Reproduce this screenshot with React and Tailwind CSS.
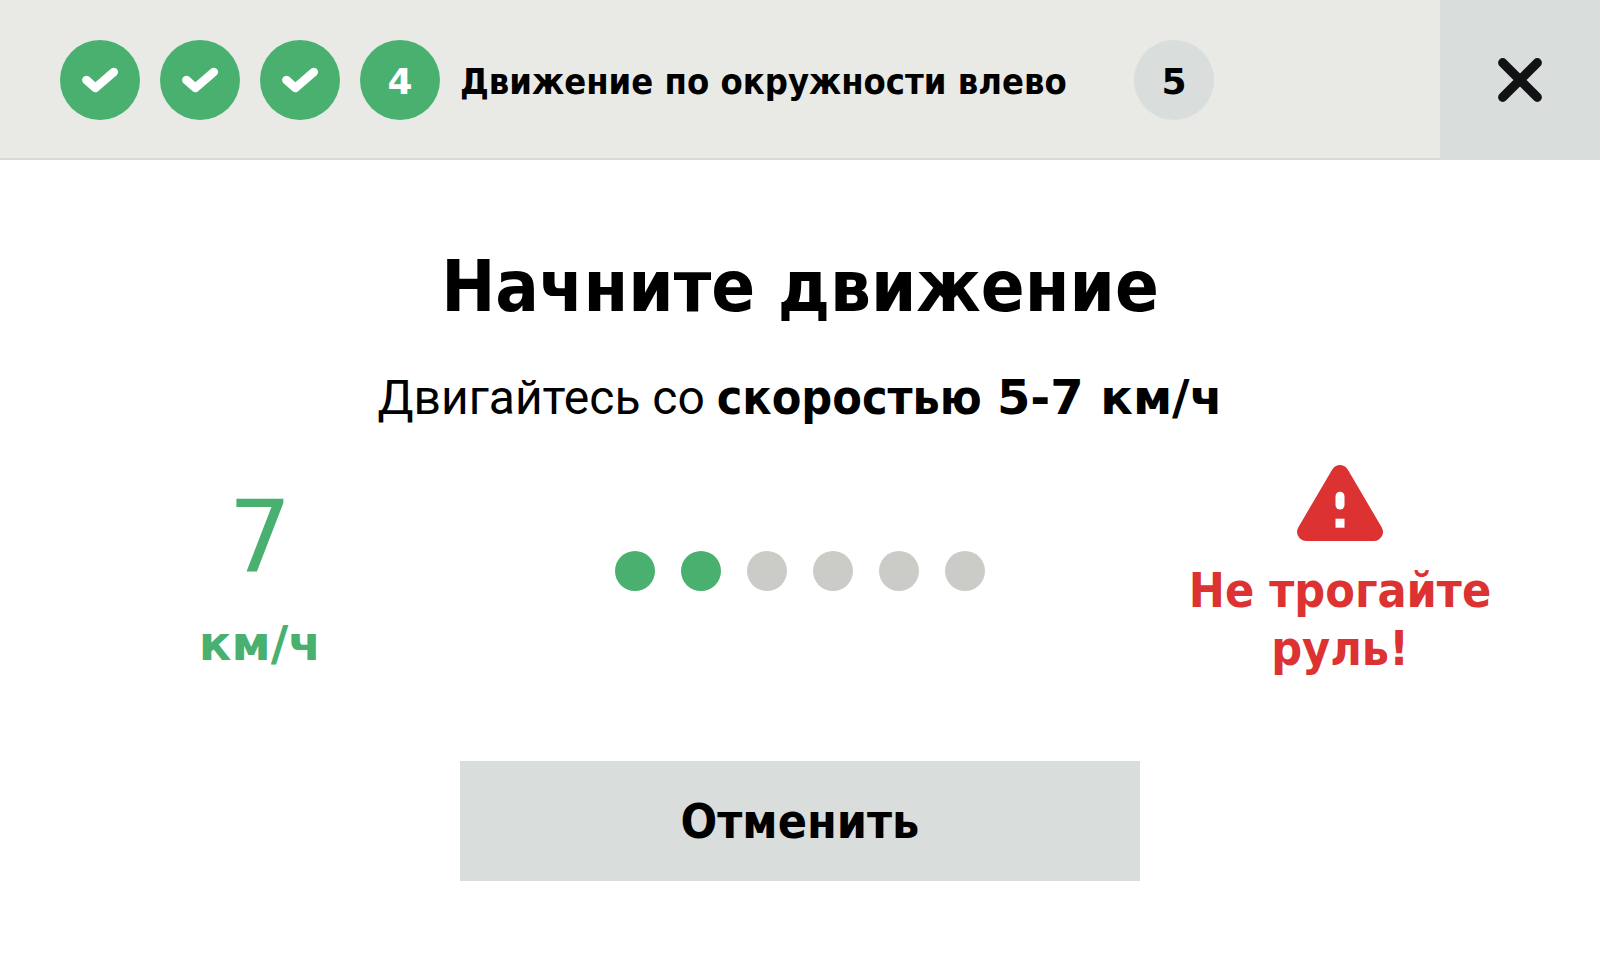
import React from "react";

const steps = [
    { id: 1, status: "done" },
    { id: 2, status: "done" },
    { id: 3, status: "done" },
    { id: 4, status: "active", label: "Движение по окружности влево" },
    { id: 5, status: "pending" },
];

const TOTAL_DOTS = 6;

const CheckIcon = () => (
    <svg className="size-20" viewBox="0 0 80 80" fill="none" aria-hidden="true">
        <path
            d="M26.4 40L35.3 47.9L53.8 32"
            stroke="currentColor"
            strokeWidth="8.6"
            strokeLinecap="round"
            strokeLinejoin="round"
        />
    </svg>
);

const CloseIcon = () => (
    <svg className="size-11" viewBox="0 0 44 44" fill="none" aria-hidden="true">
        <path d="M4.7 4.7L39.3 39.3M39.3 4.7L4.7 39.3" stroke="currentColor" strokeWidth="9.2" strokeLinecap="round" />
    </svg>
);

const WarningIcon = () => (
    <svg className="h-[76px] w-[86px]" viewBox="0 0 86 76" aria-hidden="true">
        <path
            d="M43 9L77 67H9Z"
            fill="currentColor"
            stroke="currentColor"
            strokeWidth="18"
            strokeLinejoin="round"
        />
        <rect x="38.5" y="26.8" width="9" height="17.8" rx="4.5" fill="#fff" />
        <rect x="38.5" y="53.7" width="9" height="9" fill="#fff" />
    </svg>
);

const Step = ({ step }) => {
    const isPending = step.status === "pending";

    return (
        <li className="flex items-center gap-5" aria-current={step.status === "active" ? "step" : undefined}>
            <span
                className={`flex size-20 shrink-0 items-center justify-center rounded-full font-['DejaVu_Sans',sans-serif] ${
                    isPending ? "bg-[#d9dddb] text-black" : "bg-[#49b06f] text-white"
                }`}
            >
                {step.status === "done" ? <CheckIcon /> : <span className="pt-1">{step.id}</span>}
            </span>
            {step.label && <span className="w-[654px] pt-1">{step.label}</span>}
        </li>
    );
};

const App = () => {
    const filledDots = 2;

    return (
        <div className="min-h-screen bg-white font-['DejaVu_Sans_Condensed','DejaVu_Sans',sans-serif] text-black">
            <header className="flex h-40 items-stretch justify-between bg-[#e9eae6]">
                <ol className="flex grow items-center gap-5 border-b-2 border-[#d9dad8] pt-0.5 pl-15 text-4xl font-bold whitespace-nowrap">
                    {steps.map((step) => (
                        <Step key={step.id} step={step} />
                    ))}
                </ol>
                <button
                    type="button"
                    aria-label="Закрыть"
                    className="flex w-40 shrink-0 items-center justify-center bg-[#d9dddb] text-[#101214]"
                >
                    <CloseIcon />
                </button>
            </header>

            <main className="px-15 pt-20 pb-16 text-5xl">
                <h1 className="text-center text-7xl leading-[92px] font-bold">Начните движение</h1>
                <p className="mt-9 text-center leading-[58px]">
                    <span className="font-['Roboto',sans-serif]">Двигайтесь со </span>
                    <strong className="font-bold">
                        скоростью <span className="font-['DejaVu_Sans',sans-serif]">5-7 км/ч</span>
                    </strong>
                </p>

                <div className="mt-[38px] grid grid-cols-[10fr_17fr_10fr] items-center">
                    <div className="flex flex-col items-center gap-4 pt-2 font-['DejaVu_Sans',sans-serif] text-[#49b06f]">
                        <span className="text-[100px] leading-[120px]">7</span>
                        <span className="leading-[58px] font-bold">км/ч</span>
                    </div>

                    <div className="flex justify-center gap-[26px]">
                        {Array.from({ length: TOTAL_DOTS }, (_, i) => (
                            <span
                                key={i}
                                className={`size-10 rounded-full ${i < filledDots ? "bg-[#49b06f]" : "bg-[#cbccc8]"}`}
                            />
                        ))}
                    </div>

                    <div className="flex flex-col items-center gap-5 text-center text-[#dc3232]">
                        <WarningIcon />
                        <p className="leading-[58px] font-bold">Не трогайте руль!</p>
                    </div>
                </div>

                <div className="mt-21 grid grid-cols-[10fr_17fr_10fr]">
                    <button type="button" className="col-start-2 h-30 bg-[#d9dddb] font-bold">
                        Отменить
                    </button>
                </div>
            </main>
        </div>
    );
};

export default App;
